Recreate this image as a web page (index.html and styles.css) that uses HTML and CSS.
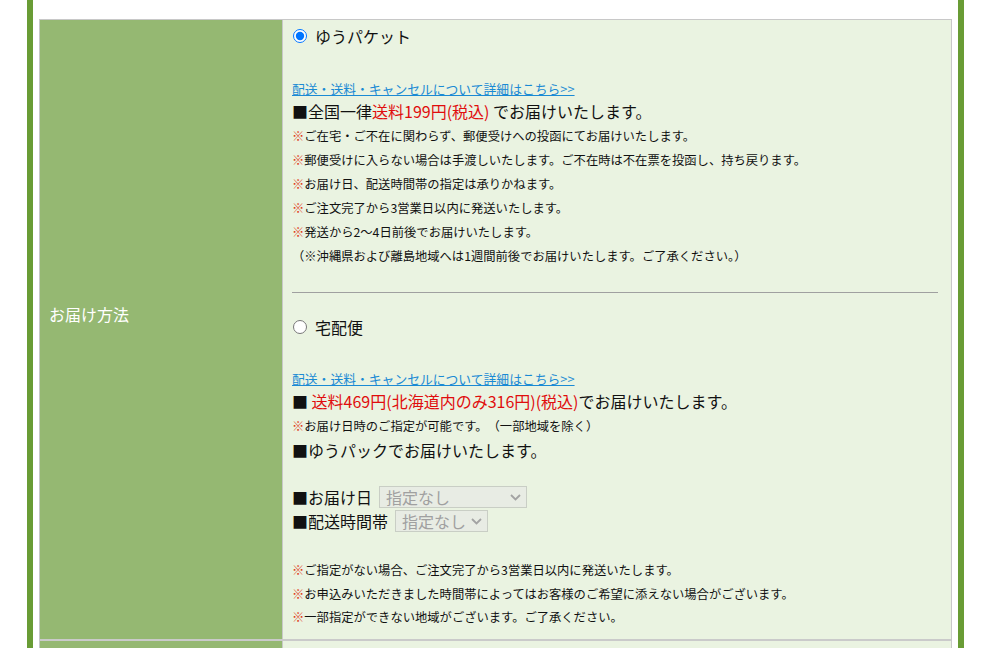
FILE: index.html
```html
<!DOCTYPE html>
<html lang="ja">
<head>
<meta charset="utf-8">
<title>お届け方法</title>
<link rel="stylesheet" href="styles.css">
</head>
<body>
<div class="page">
  <div class="table">
    <div class="row">
      <div class="th">お届け方法</div>
      <div class="td">
        <label class="opt"><input class="radio" type="radio" name="method" checked>ゆうパケット</label>
        <a class="link first" href="#">配送・送料・キャンセルについて詳細はこちら&gt;&gt;</a>
        <p class="big">■全国一律<span class="red">送料199円(税込)</span> でお届けいたします。</p>
        <p class="note"><span class="mark">※</span>ご在宅・ご不在に関わらず、郵便受けへの投函にてお届けいたします。</p>
        <p class="note"><span class="mark">※</span>郵便受けに入らない場合は手渡しいたします。ご不在時は不在票を投函し、持ち戻ります。</p>
        <p class="note"><span class="mark">※</span>お届け日、配送時間帯の指定は承りかねます。</p>
        <p class="note"><span class="mark">※</span>ご注文完了から3営業日以内に発送いたします。</p>
        <p class="note"><span class="mark">※</span>発送から2～4日前後でお届けいたします。</p>
        <p class="note">（※沖縄県および離島地域へは1週間前後でお届けいたします。ご了承ください。）</p>
        <hr class="sep">
        <label class="opt"><input class="radio" type="radio" name="method">宅配便</label>
        <a class="link second" href="#">配送・送料・キャンセルについて詳細はこちら&gt;&gt;</a>
        <p class="big">■ <span class="red">送料469円(北海道内のみ316円)(税込)</span>でお届けいたします。</p>
        <p class="note"><span class="mark">※</span>お届け日時のご指定が可能です。　（一部地域を除く）</p>
        <p class="big">■ゆうパックでお届けいたします。</p>
        <div class="picks">
          <p class="pick">■お届け日
            <span class="selwrap">
              <select class="sel sel-date" disabled><option>指定なし</option></select>
              <svg class="chev" width="11" height="7" viewBox="0 0 11 7"><path d="M1 1 L5.5 5.5 L10 1" fill="none" stroke="#a3a3a3" stroke-width="1.8"/></svg>
            </span>
          </p>
          <p class="pick">■配送時間帯
            <span class="selwrap">
              <select class="sel sel-time" disabled><option>指定なし</option></select>
              <svg class="chev" width="11" height="7" viewBox="0 0 11 7"><path d="M1 1 L5.5 5.5 L10 1" fill="none" stroke="#a3a3a3" stroke-width="1.8"/></svg>
            </span>
          </p>
        </div>
        <div class="notes-end">
          <p class="note tight"><span class="mark">※</span>ご指定がない場合、ご注文完了から3営業日以内に発送いたします。</p>
          <p class="note tight"><span class="mark">※</span>お申込みいただきました時間帯によってはお客様のご希望に添えない場合がございます。</p>
          <p class="note tight"><span class="mark">※</span>一部指定ができない地域がございます。ご了承ください。</p>
        </div>
      </div>
    </div>
    <div class="row">
      <div class="th"></div>
      <div class="td td-empty"></div>
    </div>
  </div>
</div>
</body>
</html>
```

FILE: styles.css
```css
html, body {
  margin: 0;
  padding: 0;
  overflow: hidden;
  background: #fff;
}

body {
  font-family: "Noto Sans CJK JP", "Noto Sans", sans-serif;
  color: #111;
}

.page {
  box-sizing: border-box;
  width: 937px;
  min-height: 100vh;
  margin-left: 27px;
  padding: 19px 6px 0;
  border-left: 6px solid #699c35;
  border-right: 6px solid #699c35;
}

.table {
  border: 1px solid #c8c8c8;
  border-bottom: none;
}

.row {
  display: grid;
  grid-template-columns: 243px 1fr;
  border-bottom: 2px solid #cacaca;
}

.th {
  display: flex;
  align-items: center;
  background: #95b872;
  color: #fff;
  font-size: 16px;
  padding: 0 0 31px 9px;
  border-right: 1px solid #c8c8c8;
}

.td {
  background: #eaf3e1;
  padding: 4px 13px 9.5px 9px;
}

.td-empty {
  min-height: 40px;
  padding: 0;
}

.opt {
  display: flex;
  align-items: center;
  height: 24px;
  font-size: 16px;
}

.radio {
  margin: 0 8px 0 1px;
  width: 14px;
  height: 14px;
}

.link {
  display: block;
  font-size: 12.8px;
  line-height: 21px;
  color: #1a8ad4;
  text-decoration: underline;
}

.link.first {
  margin-top: 30px;
}

.link.second {
  margin-top: 29px;
}

.big {
  margin: 0;
  font-size: 16px;
  line-height: 25px;
}

.red {
  color: #e00d0d;
}

.note {
  margin: 0;
  font-size: 12.3px;
  line-height: 24px;
}

.note.tight {
  line-height: 23.5px;
}

.mark {
  color: #e0401a;
}

.sep {
  margin: 24px 0 22px;
  border: none;
  border-top: 1px solid #a0a0a0;
  height: 0;
}

.picks {
  margin-top: 22px;
}

.pick {
  margin: 0;
  font-size: 16px;
  line-height: 24px;
  height: 24px;
  display: flex;
  align-items: center;
  gap: 7px;
}

.selwrap {
  position: relative;
  display: inline-block;
  height: 22px;
}

.sel {
  -webkit-appearance: none;
  appearance: none;
  box-sizing: border-box;
  display: block;
  font-family: inherit;
  font-size: 16px;
  line-height: 20px;
  height: 22px;
  padding: 0 0 0 6px;
  margin: 0;
  color: #a0a0a0;
  background: #e8ece4;
  border: 1px solid #c9cec5;
  border-radius: 0;
  opacity: 1;
}

.sel-date {
  width: 148px;
}

.sel-time {
  width: 93px;
}

.chev {
  position: absolute;
  right: 6px;
  top: 8px;
}

.notes-end {
  margin-top: 26px;
}
```
